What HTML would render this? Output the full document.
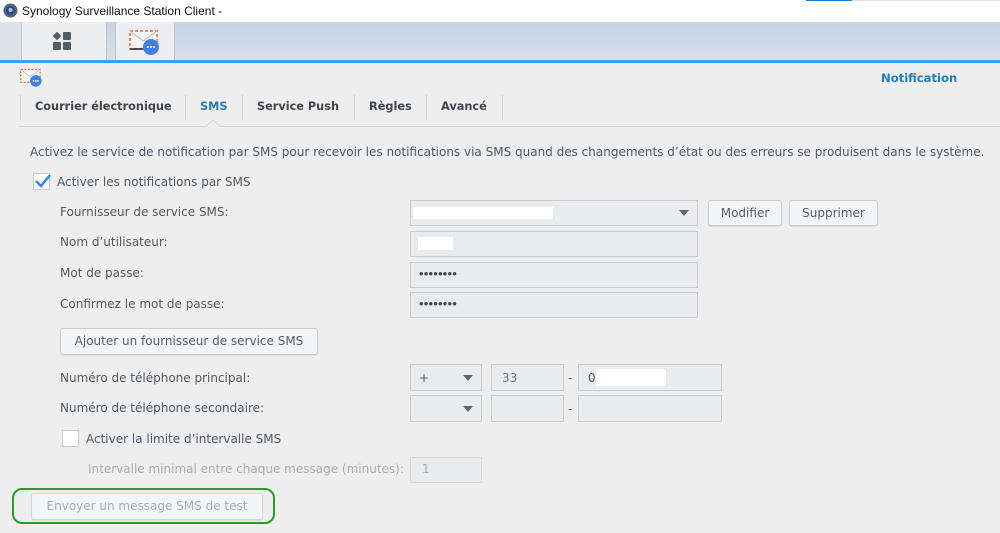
<!DOCTYPE html><html><head><meta charset="utf-8"><style>
*{margin:0;padding:0;box-sizing:border-box}
body{width:1000px;height:533px;background:#eeeeee;position:relative;overflow:hidden;font-family:"DejaVu Sans","Liberation Sans",sans-serif;font-size:12px;color:#505a64}
.a{position:absolute;white-space:nowrap}
.t{line-height:14px}
.in{position:absolute;background:#e8ecf0;border:1px solid #c8cdd2}
.btn{position:absolute;background:#f4f5f7;border:1px solid #c9ccd0;border-radius:3px;text-align:center;color:#555d66;box-shadow:0 1px 1px rgba(0,0,0,.08)}
.tab{position:absolute;top:107px;font-weight:bold;color:#3c4650;font-size:11.3px;line-height:0}
.sep{position:absolute;top:95px;width:1px;height:25px;background:#d0d3d6}
.arr{position:absolute;width:0;height:0;border-left:5px solid transparent;border-right:5px solid transparent;border-top:6px solid #5b6670}
.wh{position:absolute;background:#fff}
.dots{position:absolute;font-size:13px;letter-spacing:0.2px;color:#444;font-family:"Liberation Sans",sans-serif}
</style></head><body>
<div class="a" style="left:0;top:0;width:1000px;height:22px;background:#fff"></div>
<svg class="a" style="left:3px;top:3px" width="15" height="15" viewBox="0 0 15 15"><circle cx="7.5" cy="7.5" r="7" fill="#5a6470"/><circle cx="7.5" cy="7.5" r="4.5" fill="#2a4e8a"/><circle cx="7.5" cy="7" r="2" fill="#9cc8f0"/></svg>
<div class="a" style="left:22px;top:4px;font-family:'Liberation Sans',sans-serif;font-size:12px;color:#111">Synology Surveillance Station Client -</div>
<div class="a" style="left:806px;top:0;width:46px;height:1px;background:#1f7ad0"></div>
<div class="a" style="left:852px;top:0;width:148px;height:1px;background:#e0e0e0"></div>
<div class="a" style="left:0;top:22px;width:1000px;height:39px;background:linear-gradient(#c5d3e6,#d6e1ed)"></div>
<div class="a" style="left:0;top:22px;width:21px;height:39px;background:#dde3ea"></div>
<div class="a" style="left:21px;top:22px;width:86px;height:39px;background:#eceef1;border-left:1px solid #bfc5cc;border-right:1px solid #bfc5cc"></div>
<div class="a" style="left:115px;top:22px;width:60px;height:39px;background:#eceef1;border-left:1px solid #bfc5cc;border-right:1px solid #bfc5cc"></div>
<svg class="a" style="left:52px;top:30px" width="22" height="22" viewBox="0 0 22 22"><rect x="2" y="3" width="6" height="6" transform="rotate(45 5 6)" fill="#545d66"/><rect x="11" y="2" width="8" height="8" rx="1" fill="#545d66"/><rect x="1" y="12" width="8" height="8" rx="1" fill="#545d66"/><rect x="11" y="12" width="8" height="8" rx="1" fill="#545d66"/></svg>
<svg class="a" style="left:129px;top:30px" width="32" height="26" viewBox="0 0 32 26"><rect x="1" y="1" width="27" height="18" fill="#f4f4f4" stroke="#e0693a" stroke-dasharray="3 2" stroke-width="1.5"/><path d="M1 1 L14 11 L28 1" stroke="#bbb" fill="none"/><line x1="1" y1="19" x2="18" y2="19" stroke="#222" stroke-width="1.5"/><circle cx="22" cy="17" r="8" fill="#3f7fe6"/><circle cx="19" cy="17" r="1" fill="#fff"/><circle cx="22" cy="17" r="1" fill="#fff"/><circle cx="25" cy="17" r="1" fill="#fff"/></svg>
<div class="a" style="left:0;top:60px;width:1000px;height:3px;background:#3d9ff2"></div>
<svg class="a" style="left:20px;top:68px" width="23" height="20" viewBox="0 0 32 26"><rect x="1" y="1" width="27" height="18" fill="#f4f4f4" stroke="#e0693a" stroke-dasharray="3 2" stroke-width="1.5"/><path d="M1 1 L14 11 L28 1" stroke="#bbb" fill="none"/><circle cx="22" cy="17" r="8" fill="#3f7fe6"/><circle cx="19" cy="17" r="1.2" fill="#fff"/><circle cx="22" cy="17" r="1.2" fill="#fff"/><circle cx="25" cy="17" r="1.2" fill="#fff"/></svg>
<div class="a" style="left:881px;top:71px;font-weight:bold;color:#1f7fc0;font-size:11.6px">Notification</div>
<div class="sep" style="left:20px"></div><div class="sep" style="left:185px"></div><div class="sep" style="left:242px"></div><div class="sep" style="left:354px"></div><div class="sep" style="left:426px"></div><div class="sep" style="left:502px"></div>
<div class="tab" style="left:35px">Courrier électronique</div>
<div class="tab" style="left:200px;color:#1f7fc0">SMS</div>
<div class="tab" style="left:257px">Service Push</div>
<div class="tab" style="left:369px">Règles</div>
<div class="tab" style="left:441px">Avancé</div>
<div class="a" style="left:19px;top:126px;width:981px;height:1px;background:#d2d5d8"></div>
<svg class="a" style="left:205px;top:119px" width="16" height="8"><path d="M0 8 L8 1 L16 8" fill="#eee" stroke="#d2d5d8"/></svg>
<div class="a t" style="left:30px;top:145px">Activez le service de notification par SMS pour recevoir les notifications via SMS quand des changements d’état ou des erreurs se produisent dans le système.</div>
<div class="a" style="left:33px;top:173px;width:17px;height:17px;background:#fff;border:1px solid #c8ccd0"></div>
<svg class="a" style="left:34px;top:172px" width="18" height="18"><path d="M2 9 L7 14 L16 3" stroke="#2d8ae6" stroke-width="2.5" fill="none"/></svg>
<div class="a t" style="left:57px;top:175px">Activer les notifications par SMS</div>
<div class="a t" style="left:60px;top:205px">Fournisseur de service SMS:</div>
<div class="a t" style="left:60px;top:235px">Nom d’utilisateur:</div>
<div class="a t" style="left:60px;top:266px">Mot de passe:</div>
<div class="a t" style="left:60px;top:297px">Confirmez le mot de passe:</div>
<div class="in" style="left:410px;top:200px;width:288px;height:26px"></div><div class="wh" style="left:413px;top:207px;width:140px;height:12px"></div><div class="arr" style="left:679px;top:210px"></div>
<div class="in" style="left:410px;top:231px;width:288px;height:26px"></div><div class="wh" style="left:418px;top:237px;width:35px;height:13px"></div>
<div class="in" style="left:410px;top:262px;width:288px;height:26px"></div><div class="dots" style="left:419px;top:266px">••••••••</div>
<div class="in" style="left:410px;top:292px;width:288px;height:26px"></div><div class="dots" style="left:419px;top:296px">••••••••</div>
<div class="btn" style="left:708px;top:200px;width:74px;height:26px;line-height:24px">Modifier</div>
<div class="btn" style="left:789px;top:200px;width:89px;height:26px;line-height:24px">Supprimer</div>
<div class="btn" style="left:60px;top:328px;width:258px;height:27px;line-height:25px">Ajouter un fournisseur de service SMS</div>
<div class="a t" style="left:60px;top:371px">Numéro de téléphone principal:</div>
<div class="a t" style="left:60px;top:401px">Numéro de téléphone secondaire:</div>
<div class="in" style="left:410px;top:364px;width:72px;height:27px"></div><div class="a t" style="left:419px;top:371px">+</div><div class="arr" style="left:463px;top:375px"></div>
<div class="in" style="left:491px;top:364px;width:73px;height:27px"></div><div class="a t" style="left:502px;top:371px;color:#777">33</div>
<div class="a t" style="left:568px;top:371px">-</div>
<div class="in" style="left:578px;top:364px;width:144px;height:27px"></div><div class="a t" style="left:588px;top:371px">0</div><div class="wh" style="left:596px;top:369px;width:70px;height:17px"></div>
<div class="in" style="left:410px;top:395px;width:72px;height:27px"></div><div class="arr" style="left:463px;top:406px"></div>
<div class="in" style="left:491px;top:395px;width:73px;height:27px"></div>
<div class="a t" style="left:568px;top:402px">-</div>
<div class="in" style="left:578px;top:395px;width:144px;height:27px"></div>
<div class="a" style="left:62px;top:430px;width:17px;height:17px;background:#fff;border:1px solid #c8ccd0"></div>
<div class="a t" style="left:86px;top:432px">Activer la limite d’intervalle SMS</div>
<div class="a t" style="left:88px;top:462px;color:#a8adb2">Intervalle minimal entre chaque message (minutes):</div>
<div class="in" style="left:410px;top:457px;width:72px;height:26px;border-color:#d5d9dd"></div><div class="a t" style="left:422px;top:462px;color:#a8adb2">1</div>
<div class="btn" style="left:31px;top:493px;width:232px;height:27px;line-height:25px;color:#a8adb2;border-color:#d5d8db;background:#f4f5f7">Envoyer un message SMS de test</div>
<div class="a" style="left:12px;top:488px;width:263px;height:36px;border:2px solid #2c9a2c;border-radius:10px"></div>
</body></html>
